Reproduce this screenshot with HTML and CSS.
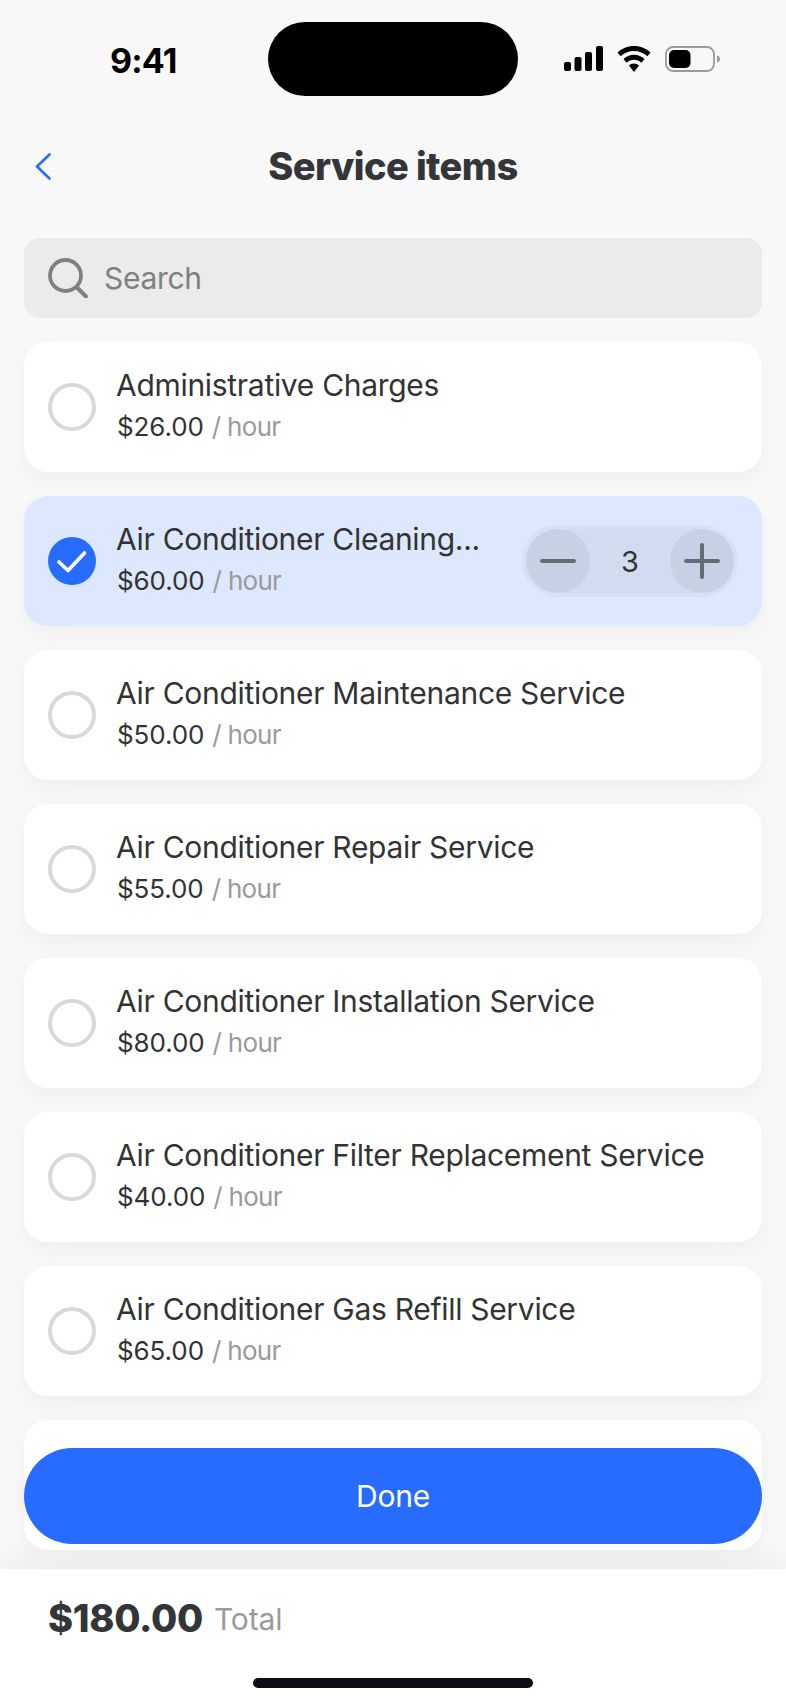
FILE: index.html
```html
<!DOCTYPE html>
<html lang="en">
<head>
<meta charset="utf-8">
<title>Service items</title>
<link rel="stylesheet" href="styles.css">
</head>
<body>
<div class="screen">
  <div class="status">
    <span class="clock">9:41</span>
    <div class="island"></div>
    <div class="status-icons">
      <svg class="signal" width="39" height="25" viewBox="0 0 39 25"><rect x="0" y="16" width="7" height="9" rx="2"/><rect x="10.5" y="11" width="7" height="14" rx="2"/><rect x="21" y="6" width="7" height="19" rx="2"/><rect x="32" y="0" width="7" height="25" rx="2"/></svg>
      <svg class="wifi" width="34" height="26" viewBox="0 0 34 26"><path d="M17 0C10.6 0 4.800 2.500 .5 6.500l3.100 3.700C7.100 6.900 11.800 4.900 17 4.900s9.900 2 13.400 5.300l3.100-3.700C29.200 2.500 23.400 0 17 0z"/><path d="M17 8.800c-4.100 0-7.800 1.600-10.500 4.200l3.100 3.700c1.900-1.800 4.500-3 7.400-3s5.500 1.200 7.400 3l3.100-3.700C24.800 10.400 21.100 8.800 17 8.800z"/><path d="M17 17.500c-2 0-3.800.8-5.100 2L17 26l5.100-6.500c-1.300-1.200-3.100-2-5.100-2z"/></svg>
      <svg class="battery" width="56" height="26" viewBox="0 0 56 26"><rect x="1" y="1" width="48" height="24" rx="7" fill="none" stroke="#999" stroke-width="1.800"/><rect x="4" y="4" width="21.500" height="18" rx="5"/><path d="M52 9.500c1.800.5 3 1.900 3 3.500s-1.200 3-3 3.500z" fill="#999"/></svg>
    </div>
  </div>

  <header class="nav">
    <svg class="back" width="16" height="27" viewBox="0 0 16 27"><path d="M14.500 1.500L2 13.500l12.500 12" fill="none" stroke="#276cff" stroke-width="2.600" stroke-linecap="round" stroke-linejoin="round"/></svg>
    <h1 class="nav-title">Service items</h1>
  </header>

  <div class="search">
    <svg width="40" height="40" viewBox="0 0 40 40"><circle cx="17.500" cy="17.500" r="15.500" fill="none" stroke="#808080" stroke-width="3.800"/><path d="M28.500 29l9.500 9.500" fill="none" stroke="#808080" stroke-width="4" stroke-linecap="round"/></svg>
    <span class="search-text">Search</span>
  </div>

  <main class="list">
    <div class="item">
      <span class="radio"></span>
      <div class="item-body">
        <div class="item-name">Administrative Charges</div>
        <div class="item-price"><span class="amount">$26.00</span><span class="unit">/ hour</span></div>
      </div>
    </div>
    <div class="item item-selected">
      <svg class="radio-on" width="48" height="48" viewBox="0 0 48 48"><circle cx="24" cy="24" r="24" fill="#276cff"/><path d="M11 25l9 8.500L36.500 16" fill="none" stroke="#fff" stroke-width="3.600" stroke-linecap="round" stroke-linejoin="round"/></svg>
      <div class="item-body">
        <div class="item-name">Air Conditioner Cleaning...</div>
        <div class="item-price"><span class="amount">$60.00</span><span class="unit">/ hour</span></div>
      </div>
      <div class="stepper">
        <span class="step-btn"><svg width="36" height="36" viewBox="0 0 36 36"><path d="M2 18h32" stroke="#666a75" stroke-width="4" stroke-linecap="round"/></svg></span>
        <span class="step-count">3</span>
        <span class="step-btn"><svg width="36" height="36" viewBox="0 0 36 36"><path d="M2 18h32M18 2v32" stroke="#666a75" stroke-width="4" stroke-linecap="round"/></svg></span>
      </div>
    </div>
    <div class="item">
      <span class="radio"></span>
      <div class="item-body">
        <div class="item-name">Air Conditioner Maintenance Service</div>
        <div class="item-price"><span class="amount">$50.00</span><span class="unit">/ hour</span></div>
      </div>
    </div>
    <div class="item">
      <span class="radio"></span>
      <div class="item-body">
        <div class="item-name">Air Conditioner Repair Service</div>
        <div class="item-price"><span class="amount">$55.00</span><span class="unit">/ hour</span></div>
      </div>
    </div>
    <div class="item">
      <span class="radio"></span>
      <div class="item-body">
        <div class="item-name">Air Conditioner Installation Service</div>
        <div class="item-price"><span class="amount">$80.00</span><span class="unit">/ hour</span></div>
      </div>
    </div>
    <div class="item">
      <span class="radio"></span>
      <div class="item-body">
        <div class="item-name">Air Conditioner Filter Replacement Service</div>
        <div class="item-price"><span class="amount">$40.00</span><span class="unit">/ hour</span></div>
      </div>
    </div>
    <div class="item">
      <span class="radio"></span>
      <div class="item-body">
        <div class="item-name">Air Conditioner Gas Refill Service</div>
        <div class="item-price"><span class="amount">$65.00</span><span class="unit">/ hour</span></div>
      </div>
    </div>
    <div class="item"></div>
  </main>

  <button class="done" type="button">Done</button>

  <footer class="summary">
    <div class="total"><span class="total-amount">$180.00</span><span class="total-label">Total</span></div>
    <div class="home-bar"></div>
  </footer>
</div>
</body>
</html>
```
FILE: styles.css
```css
* { box-sizing: border-box; }

html, body {
  margin: 0;
  padding: 0;
}

body {
  font-family: Inter, "Liberation Sans", sans-serif;
  color: #333;
  background: #f8f8f8;
}

.screen {
  position: relative;
  display: flex;
  flex-direction: column;
  width: 786px;
  height: 1704px;
  overflow: hidden;
  background: #f8f8f8;
}

/* Status bar */
.status {
  position: relative;
  flex: none;
  height: 126px;
}

.clock {
  position: absolute;
  left: 110px;
  top: 40px;
  font-size: 34px;
  line-height: 41px;
  font-weight: 700;
  letter-spacing: -0.8px;
  color: #000;
}

.island {
  position: absolute;
  left: 268px;
  top: 22px;
  width: 250px;
  height: 74px;
  border-radius: 37px;
  background: #000;
}

.status-icons {
  position: absolute;
  left: 564px;
  top: 46px;
  display: flex;
  align-items: flex-start;
  gap: 14px;
}

.status-icons svg { display: block; }

/* Navigation */
.nav {
  position: relative;
  flex: none;
  height: 80px;
  display: flex;
  align-items: center;
  justify-content: center;
}

.back {
  position: absolute;
  left: 35px;
  top: 27px;
}

.nav-title {
  margin: 0;
  font-size: 38px;
  line-height: 80px;
  font-weight: 800;
  letter-spacing: -0.6px;
  color: #333538;
}

/* Search field */
.search {
  flex: none;
  display: flex;
  align-items: center;
  gap: 16px;
  height: 80px;
  margin: 32px 24px 0;
  padding-left: 24px;
  border-radius: 16px;
  background: #ebebeb;
}

.search svg { flex: none; }

.search-text {
  font-size: 30px;
  letter-spacing: -0.3px;
  color: #808080;
}

/* Item list */
.list {
  flex: 1;
  min-height: 0;
  display: flex;
  flex-direction: column;
  gap: 24px;
  padding: 24px 24px 0;
  overflow: hidden;
}

.item {
  flex: none;
  display: flex;
  align-items: center;
  gap: 20px;
  height: 130px;
  padding: 0 24px;
  border-radius: 24px;
  background: #fff;
  box-shadow: 0 8px 20px rgba(0, 0, 0, 0.04);
}

.item-selected { background: #dde7fd; }

.radio {
  flex: none;
  width: 48px;
  height: 48px;
  border: 4px solid #d9d9d9;
  border-radius: 50%;
}

.radio-on { flex: none; }

.item-body {
  flex: 1;
  min-width: 0;
  padding-bottom: 4px;
}

.item-name {
  font-size: 30px;
  line-height: 40px;
  letter-spacing: -0.3px;
  color: #333;
  white-space: nowrap;
}

.item-price {
  display: flex;
  align-items: baseline;
  gap: 8px;
  margin-top: 4px;
  padding-left: 1px;
  line-height: 36px;
}

.amount {
  font-size: 26px;
  letter-spacing: -0.1px;
  color: #333;
}

.unit {
  font-size: 26px;
  letter-spacing: -0.7px;
  color: #9a9a9a;
}

/* Quantity stepper */
.stepper {
  flex: none;
  display: flex;
  align-items: center;
  justify-content: space-between;
  width: 216px;
  height: 72px;
  border: 4px solid #d7e1f4;
  border-radius: 36px;
  background: #d2dcf0;
}

.step-btn {
  display: flex;
  align-items: center;
  justify-content: center;
  width: 64px;
  height: 64px;
  border-radius: 50%;
  background: #c6d1e6;
}

.step-count {
  font-size: 29px;
  color: #333;
}

/* Floating confirm button */
.done {
  position: absolute;
  left: 24px;
  top: 1448px;
  width: 738px;
  height: 96px;
  border: 0;
  border-radius: 48px;
  background: #276cff;
  color: #fff;
  font-family: inherit;
  font-size: 30px;
  font-weight: 400;
  letter-spacing: -0.2px;
}

/* Totals footer */
.summary {
  position: relative;
  flex: none;
  height: 135px;
  background: #fff;
  box-shadow: 0 -8px 24px rgba(0, 0, 0, 0.05);
}

.total {
  display: flex;
  align-items: baseline;
  gap: 11px;
  padding: 24px 0 0 48px;
}

.total-amount {
  font-size: 38px;
  line-height: 50px;
  font-weight: 800;
  letter-spacing: -0.3px;
  color: #333538;
}

.total-label {
  position: relative;
  top: -2px;
  font-size: 30px;
  letter-spacing: -0.1px;
  color: #9a9a9a;
}

.home-bar {
  position: absolute;
  left: 253px;
  top: 109px;
  width: 280px;
  height: 10px;
  border-radius: 5px;
  background: #0d0e16;
}
```
